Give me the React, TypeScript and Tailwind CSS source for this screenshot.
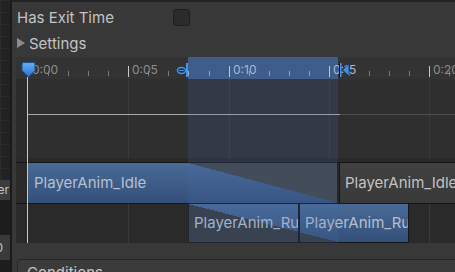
import { Fragment, type ReactNode } from 'react';

// timeline geometry (px from the timeline's left edge)
const X0 = 12;
const STEP = 100.3;
const SEL_L = 172;
const SEL_W = 150;

const majors = [0, 1, 2, 3, 4].map((i) => ({
  x: Math.round(X0 + i * STEP),
  label: `0:${String(i * 5).padStart(2, '0')}`,
}));
const minors = Array.from({ length: 22 }, (_, j) => j)
  .filter((j) => j % 5 !== 0)
  .map((j) => Math.round(X0 + (j * STEP) / 5));
const inSel = (x: number) => x >= SEL_L && x < SEL_L + SEL_W;

const GridLines = () => (
  <>
    {majors.slice(1).map((m) => (
      <div key={m.x} className="absolute inset-y-0 w-px bg-[#3a3a3a]" style={{ left: m.x }} />
    ))}
  </>
);

type ClipProps = {
  left: number;
  width: number;
  blue?: boolean;
  tri?: 'top' | 'bottom';
  triLeft?: number;
  pad: number;
  className?: string;
  children: ReactNode;
};

const Clip = ({ left, width, blue, tri, triLeft = 0, pad, className = '', children }: ClipProps) => (
  <div
    className={`absolute inset-y-0 overflow-hidden border-[#161616] ${
      blue ? 'bg-[linear-gradient(#4a6996,#33507a)] text-[#b5c0cf]' : 'bg-[linear-gradient(#414141,#393939)] text-[#c2c2c2]'
    } ${className}`}
    style={{ left, width }}
  >
    {tri === 'top' && (
      <div
        className="absolute inset-y-0 w-[150px] bg-[linear-gradient(to_top_right,transparent_50%,#424548_50%)]"
        style={{ left: triLeft }}
      />
    )}
    {tri === 'bottom' && (
      <div
        className="absolute inset-y-0 w-[150px] bg-[linear-gradient(to_top_right,#36393e_50%,transparent_50%)]"
        style={{ left: triLeft }}
      />
    )}
    <div className="relative flex h-full items-center whitespace-nowrap" style={{ paddingLeft: pad }}>
      {children}
    </div>
  </div>
);

const Timeline = () => (
  <div className="relative ml-[4px] mt-[4px] flex h-[186px] shrink-0 flex-col overflow-hidden">
    {/* Ruler */}
    <div className="relative h-[22px] shrink-0 bg-[#333333]">
      <div className="absolute inset-y-0 left-[172px] w-[150px] bg-[#3e5d8a]" />
      {minors.map((x) => (
        <div
          key={x}
          className={`absolute top-[14px] h-[5px] w-px ${inSel(x) ? 'bg-[#8ea3c2]' : 'bg-[#7a7a7a]'}`}
          style={{ left: x }}
        />
      ))}
      {majors.map((m) => (
        <Fragment key={m.label}>
          <div className="absolute top-[9px] h-[11px] w-px bg-[#c8c8c8]" style={{ left: m.x }} />
          <span
            className={`absolute top-[5px] text-[12px] leading-[15px] ${inSel(m.x + 4) ? 'text-[#a9b8cf]' : 'text-[#8e8e8e]'}`}
            style={{ left: m.x + 4 }}
          >
            {m.label}
          </span>
        </Fragment>
      ))}

      {/* playhead */}
      <svg className="absolute left-[5px] top-[4px]" width="15" height="17" viewBox="0 0 15 17">
        <defs>
          <linearGradient id="ph" x1="0" y1="0" x2="0" y2="1">
            <stop offset="0" stopColor="#66acf4" />
            <stop offset="1" stopColor="#2a74d0" />
          </linearGradient>
        </defs>
        <path d="M2.5 1.5 H12.5 Q14 1.5 14 3 V9.5 L7.5 16 L1 9.5 V3 Q1 1.5 2.5 1.5Z" fill="url(#ph)" stroke="#1d4f8e" />
      </svg>

      {/* transition start marker */}
      <svg className="absolute left-[160px] top-[6px]" width="13" height="15" viewBox="0 0 13 15">
        <ellipse cx="5.5" cy="7.5" rx="4" ry="3" fill="#1f2c3d" stroke="#4a93ea" strokeWidth="1.5" />
        <line x1="3" y1="7.5" x2="8" y2="7.5" stroke="#4a93ea" strokeWidth="1" />
        <rect x="10" y="0" width="2" height="14" fill="#4a93ea" />
      </svg>

      {/* transition end marker */}
      <svg className="absolute left-[323px] top-[6px]" width="11" height="15" viewBox="0 0 11 15">
        <rect x="0" y="0" width="1" height="14" fill="#141414" />
        <rect x="1" y="0" width="1.5" height="14" fill="#4a93ea" />
        <path d="M10 1 L3.5 7 L10 13 Z" fill="#3d8fe8" stroke="#1a3d6a" strokeWidth="0.8" />
      </svg>
    </div>

    {/* Curve area */}
    <div className="relative h-[83px] shrink-0 bg-[#2f2f2f]">
      <div className="absolute inset-y-0 left-0 w-[12px] bg-[#2b2b2b]" />
      <GridLines />
      <div className="absolute inset-x-0 bottom-0 h-[4px] bg-[#292929]" />
      <div className="absolute left-[12px] top-[35px] h-px w-[312px] bg-[#a8a8a8]" />
      <div className="absolute left-[324px] right-0 top-[35px] h-px bg-[#4d4d4d]" />
    </div>

    {/* Source state row */}
    <div className="relative h-[41px] shrink-0 border-t border-[#161616] bg-[#2a2a2a] text-[15px]">
      <GridLines />
      <Clip left={12} width={310} blue tri="top" triLeft={160} pad={6} className="border-r pt-px">
        PlayerAnim_Idle
      </Clip>
      <Clip left={323} width={160} pad={5} className="border-l pt-px">
        PlayerAnim_Idle
      </Clip>
    </div>

    {/* Destination state row */}
    <div className="relative h-[40px] shrink-0 border-t border-[#161616] bg-[#2a2a2a] text-[15px]">
      <GridLines />
      <Clip left={172} width={111} blue tri="bottom" triLeft={-1} pad={5} className="border-x border-b">
        PlayerAnim_Run
      </Clip>
      <Clip left={283} width={110} blue tri="bottom" triLeft={-112} pad={5} className="border-x border-b">
        PlayerAnim_Run
      </Clip>
    </div>

    {/* transition overlay + playhead line */}
    <div className="pointer-events-none absolute bottom-0 left-[172px] top-[22px] w-[150px] bg-[rgba(70,110,170,0.18)]" />
    <div className="absolute bottom-0 left-[11px] top-[20px] w-px bg-[#c8c8c8]" />
  </div>
);

const SideStrip = () => (
  <div className="flex w-[12px] shrink-0 flex-col border-r-2 border-[#1a1a1a] text-[12px] text-[#c4c4c4]">
    <div className="h-[180px] shrink-0 bg-[#222222] bg-[linear-gradient(#2b2b2b_1px,transparent_1px),linear-gradient(90deg,#2b2b2b_1px,transparent_1px)] bg-size-[12px_12px]" />
    <div className="flex h-[20px] shrink-0 items-center justify-end overflow-hidden bg-[#3c3c3c] pr-px">er</div>
    <div className="h-[35px] shrink-0 bg-[#1d1d1d]" />
    <div className="flex h-[25px] shrink-0 items-center justify-end overflow-hidden bg-[#3a3a3a] pr-[7px]">0</div>
    <div className="flex-1 bg-[#1d1d1d]" />
  </div>
);

export default function App() {
  return (
    <div className="flex h-[272px] w-[455px] overflow-hidden bg-[#383838] font-['Inter',sans-serif] text-[15px] text-[#c4c4c4]">
      <SideStrip />
      <div className="flex min-w-0 flex-1 flex-col">
        <div className="h-[2px] shrink-0 bg-[#232323]" />
        <div className="flex h-[33px] shrink-0 items-center pl-[5px]">
          <span className="w-[156px]">Has Exit Time</span>
          <span className="mb-[2px] h-[17px] w-[17px] rounded-[3px] border border-[#1f1f1f] bg-[#2b2b2b]" />
        </div>
        <div className="flex h-[18px] shrink-0 items-center gap-[4px] pl-[5px]">
          <svg width="8" height="10" viewBox="0 0 8 10" className="mb-[3px]">
            <path d="M0 0 L8 5 L0 10 Z" fill="#8c8c8c" />
          </svg>
          <span>Settings</span>
        </div>
        <Timeline />
        <div className="-mr-[10px] ml-[5px] mt-[16px] h-[40px] shrink-0 rounded-t-[4px] border border-[#262626] bg-[#3b3b3b]">
          <div className="flex h-[26px] items-center pl-[9px]">Conditions</div>
        </div>
      </div>
    </div>
  );
}
